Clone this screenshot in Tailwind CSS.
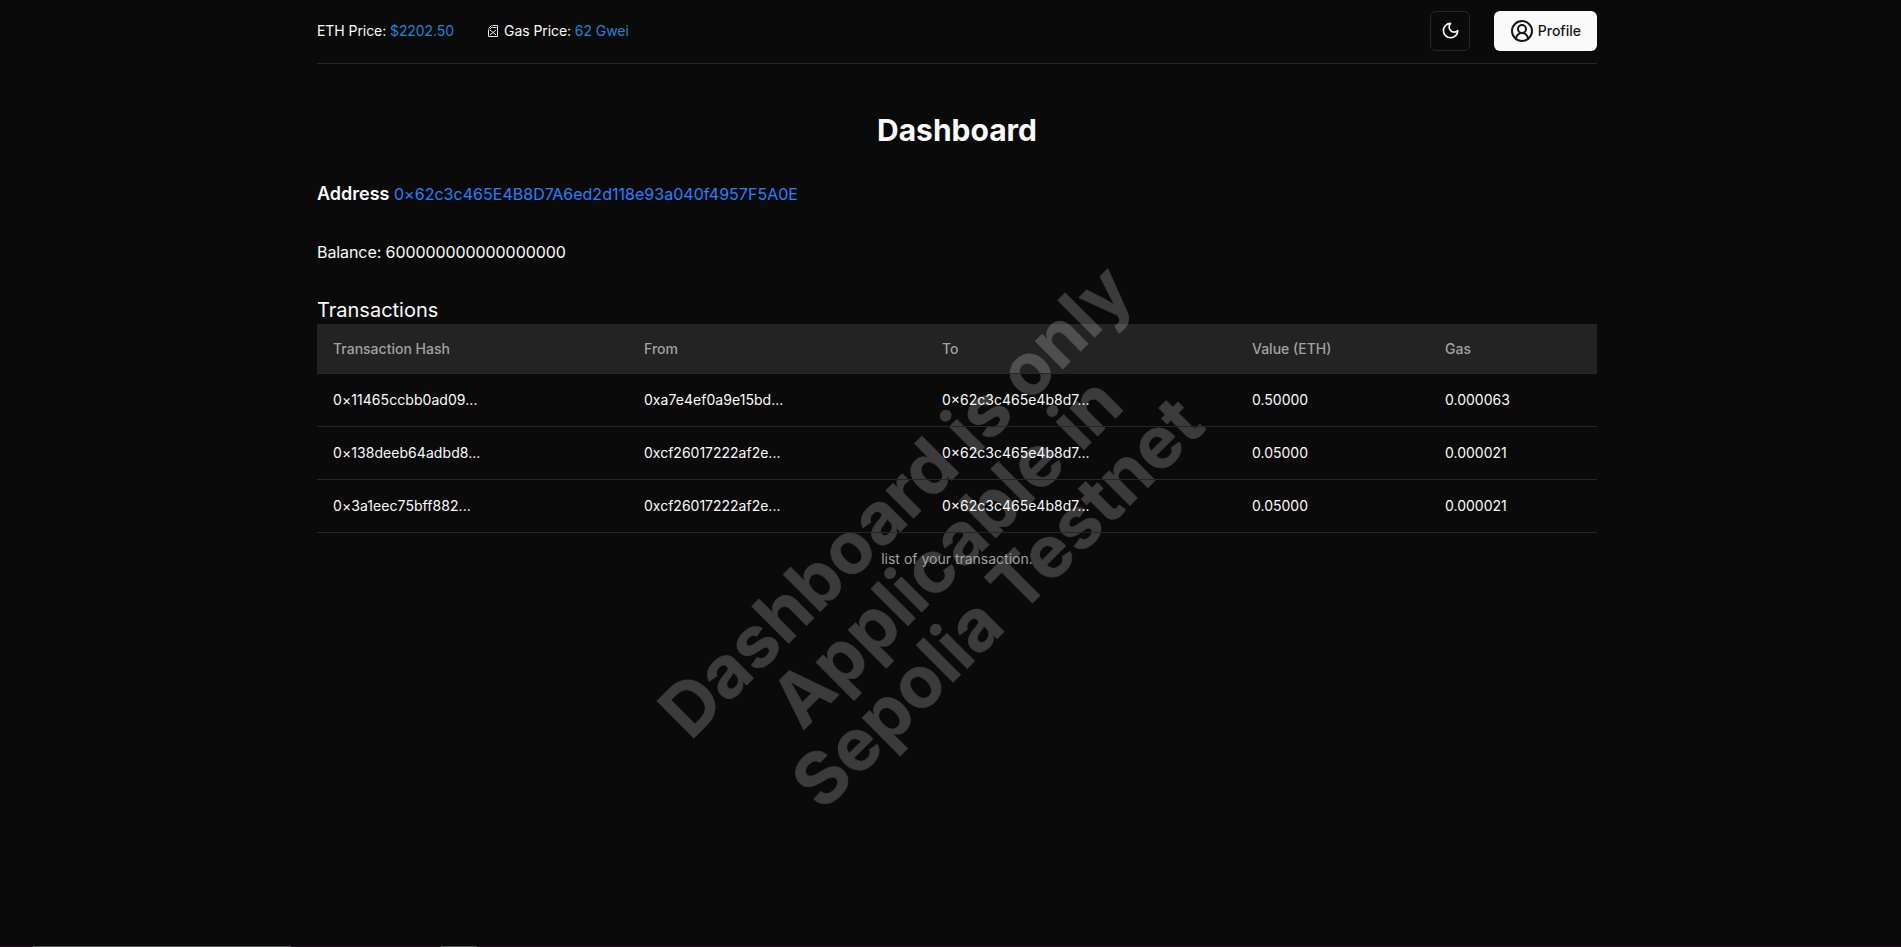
<!DOCTYPE html>
<html lang="en">
<head>
<meta charset="utf-8">
<title>Dashboard</title>
<script src="https://cdn.jsdelivr.net/npm/@tailwindcss/browser@4"></script>
</head>
<body class="relative h-[947px] overflow-hidden bg-[#0a0a0a] font-['Inter',sans-serif] text-neutral-50">
<div class="absolute top-[550.5px] left-[945.5px] -translate-x-1/2 -translate-y-1/2 -rotate-45 text-center text-7xl leading-none font-bold whitespace-nowrap text-white/20 select-none [-webkit-text-stroke:0.6px_#3b3b3b] [font-optical-sizing:none]">Dashboard is only<br>Applicable in<br>Sepolia Testnet</div>
<div class="relative ml-[317px] w-[1280px]">
  <header class="flex h-16 items-center justify-between border-b border-neutral-800 pb-0.5">
    <div class="flex items-center gap-[34px] text-sm tracking-[-0.07px]">
      <div>ETH Price: <span class="text-[#2483d4]">$2202.50</span></div>
      <div class="flex items-center gap-1.5">
        <svg class="h-3 w-2.5" viewBox="0 0 10 12" fill="none" stroke="#e5e5e5" stroke-width="1"><path d="M.5 4.500V11.500h9V.5H4.500M.5 3.500 3.500.5M1.500 4.500 4.500 1.500M4.500 2.500h4M2 5l6 5M8 5l-6 5"/></svg>
        <div>Gas Price: <span class="text-[#2483d4]">62 Gwei</span></div>
      </div>
    </div>
    <div class="flex items-center gap-6">
      <button class="flex size-10 items-center justify-center rounded-md border border-neutral-800 pl-px">
        <svg class="size-[19.2px]" viewBox="0 0 24 24" fill="none" stroke="currentColor" stroke-width="2" stroke-linecap="round" stroke-linejoin="round"><path d="M12 3a6 6 0 0 0 9 9 9 9 0 1 1-9-9Z"/></svg>
      </button>
      <button class="flex h-10 items-center gap-1 rounded-md bg-neutral-50 px-4 text-sm font-medium text-neutral-900">
        <svg class="size-6" viewBox="0 0 24 24" fill="none" stroke="currentColor" stroke-width="2" stroke-linecap="round" stroke-linejoin="round"><path d="M18 20a6 6 0 0 0-12 0"/><circle cx="12" cy="10" r="4"/><circle cx="12" cy="12" r="10"/></svg>
        Profile
      </button>
    </div>
  </header>
  <main>
    <h1 class="mt-12 text-center text-3xl leading-9 font-bold">Dashboard</h1>
    <p class="mt-8 text-base leading-7"><span class="text-lg font-semibold">Address</span> <span class="tracking-[0.03px] text-blue-500">0×62c3c465E4B8D7A6ed2d118e93a040f4957F5A0E</span></p>
    <p class="mt-8 text-base tracking-[-0.08px]">Balance: 600000000000000000</p>
    <h2 class="mt-8 text-xl">Transactions</h2>
    <table class="w-full table-fixed text-left text-sm">
      <colgroup><col class="w-[311px]"><col class="w-[298px]"><col class="w-[310px]"><col class="w-[193px]"><col></colgroup>
      <thead class="text-neutral-400">
        <tr class="h-[49px] border-b border-neutral-800 bg-white/10"><th class="px-4 pt-0.5 font-medium">Transaction Hash</th><th class="px-4 pt-0.5 font-medium">From</th><th class="px-4 pt-0.5 font-medium">To</th><th class="px-4 pt-0.5 font-medium">Value (ETH)</th><th class="px-4 pt-0.5 font-medium">Gas</th></tr>
      </thead>
      <tbody>
        <tr class="border-b border-neutral-800"><td class="p-4 tracking-[0.06px]">0×11465ccbb0ad09...</td><td class="p-4 tracking-[0.04px]">0xa7e4ef0a9e15bd...</td><td class="p-4">0×62c3c465e4b8d7...</td><td class="p-4">0.50000</td><td class="p-4">0.000063</td></tr>
        <tr class="border-b border-neutral-800"><td class="p-4 tracking-[0.06px]">0×138deeb64adbd8...</td><td class="p-4">0xcf26017222af2e...</td><td class="p-4">0×62c3c465e4b8d7...</td><td class="p-4">0.05000</td><td class="p-4">0.000021</td></tr>
        <tr class="border-b border-neutral-800"><td class="p-4 tracking-[0.06px]">0×3a1eec75bff882...</td><td class="p-4">0xcf26017222af2e...</td><td class="p-4">0×62c3c465e4b8d7...</td><td class="p-4">0.05000</td><td class="p-4">0.000021</td></tr>
      </tbody>
    </table>
    <p class="mt-4 text-center text-sm text-neutral-400">list of your transaction.</p>
  </main>
</div>
<div class="absolute bottom-0 left-0 flex h-px w-full bg-[#1c1418]"><div class="ml-[33px] w-[258px] bg-neutral-600"></div><div class="ml-[150px] w-9 bg-neutral-600"></div></div>
</body>
</html>
